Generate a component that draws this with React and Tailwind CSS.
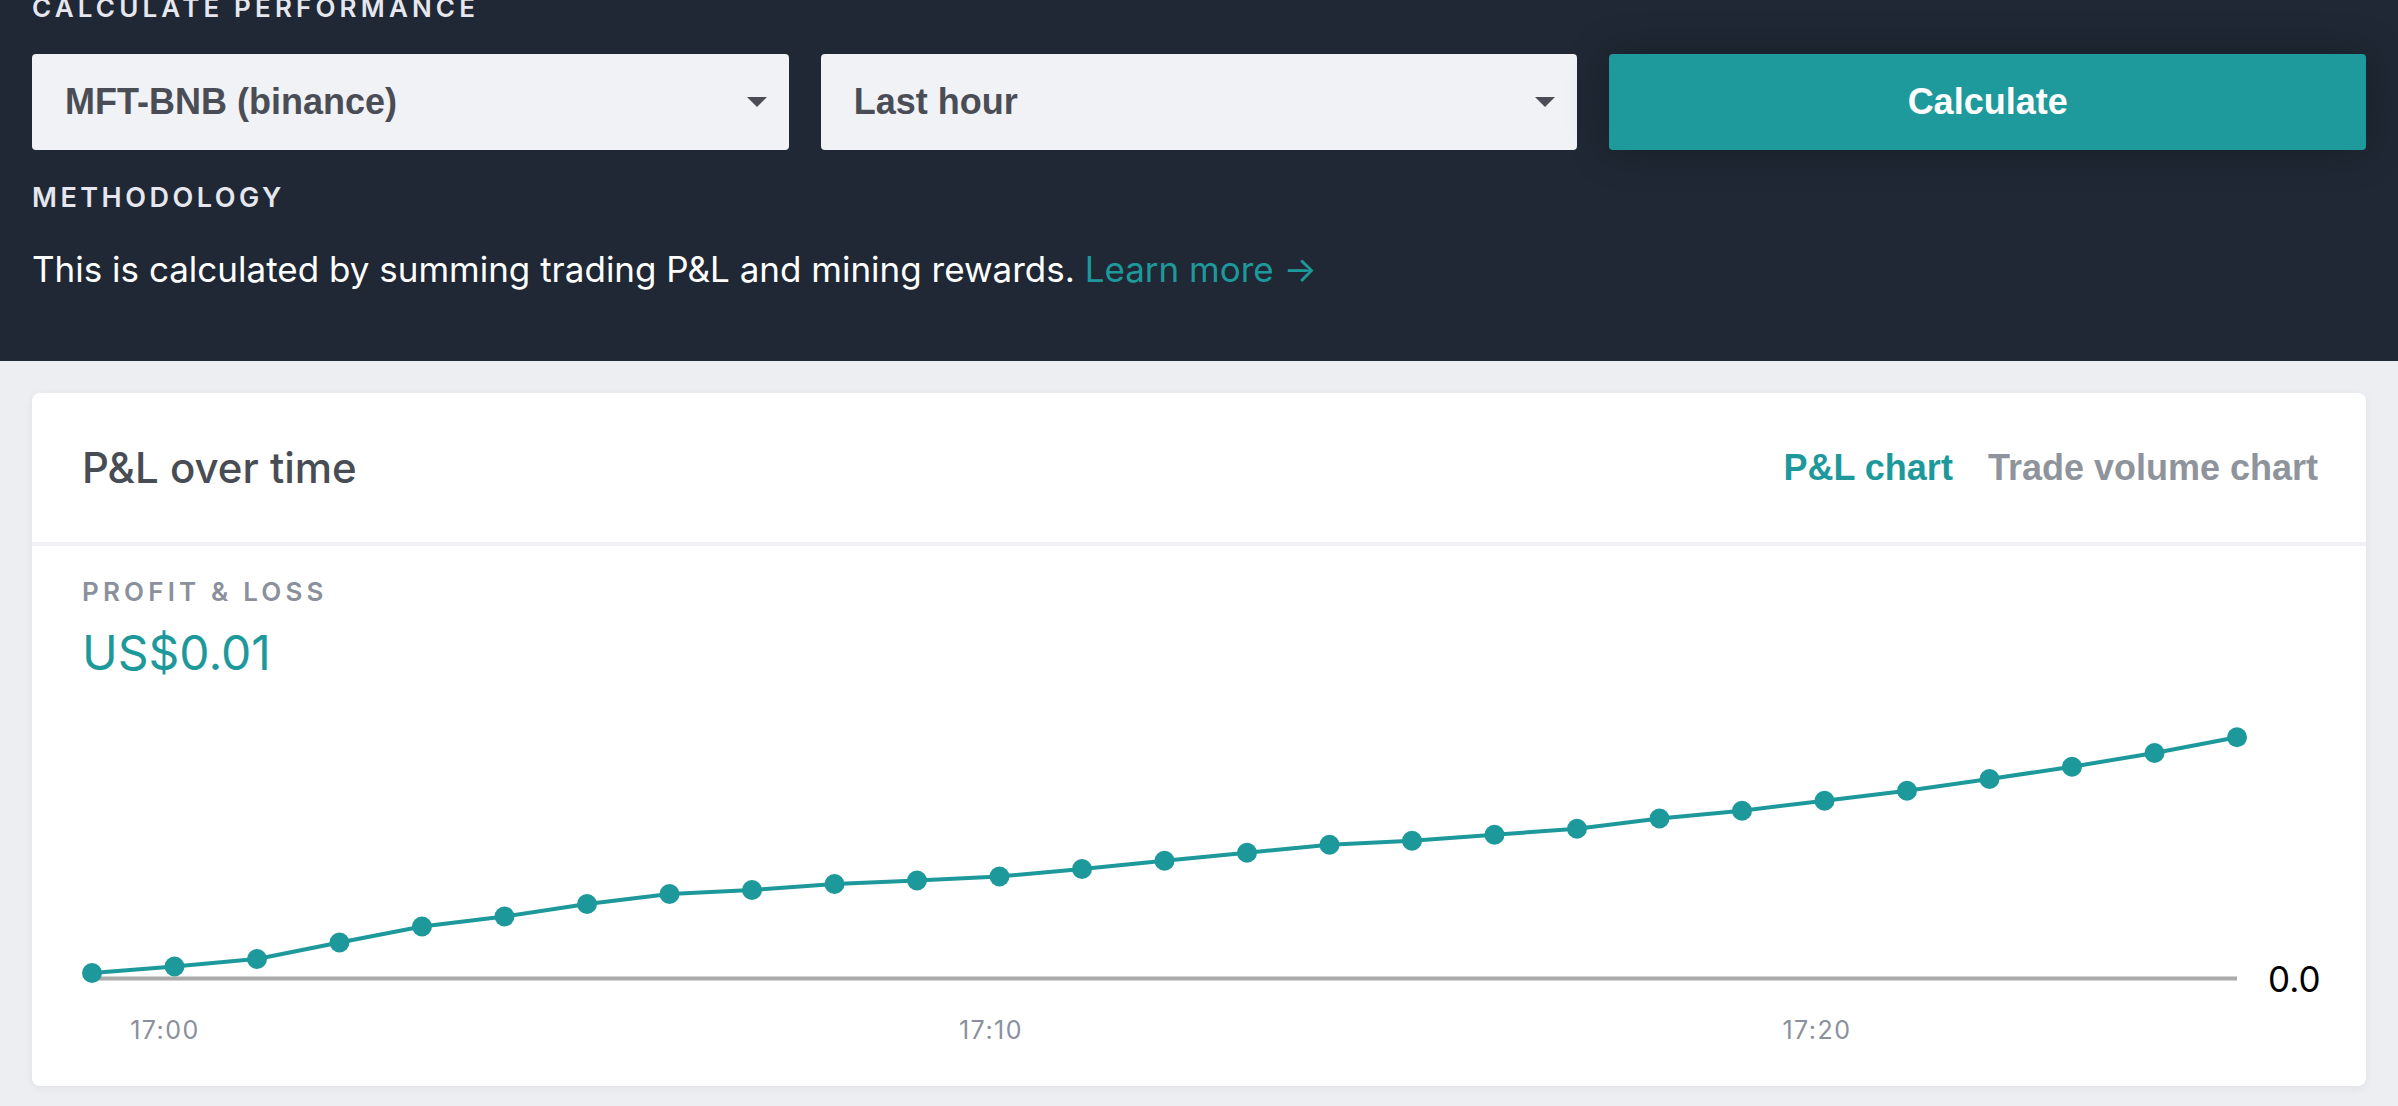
import { useState } from "react";

const TEAL = "#1e999b";

const points = [
  974, 967.5, 960, 943.5, 927.5, 917.5, 905, 895, 891, 885, 881.5, 877.5, 870,
  861.7, 853.7, 845.7, 841.7, 835.7, 829.7, 819.5, 811.7, 801.7, 791.7, 780,
  767.7, 754, 738.3,
].map((y, i) => ({ x: 60 + 82.5 * i, y: y - 678 }));

function SelectBox({ label }) {
  return (
    <div className="h-[96px] rounded-[4px] bg-[#f1f2f6] flex items-center justify-between pl-[33px] pr-[22px]">
      <span className="font-['Liberation_Sans',Arial,sans-serif] font-bold text-[36px] text-[#4a4d55]">
        {label}
      </span>
      <svg width="20" height="10" viewBox="0 0 20 10">
        <path d="M0 0 L20 0 L10 10 Z" fill="#4a4d55" />
      </svg>
    </div>
  );
}

function PnlChart() {
  const line = points.map((p) => `${p.x},${p.y}`).join(" ");

  return (
    <svg width="2335" height="409" viewBox="0 0 2335 409" className="block">
      <line x1="60" y1="301.5" x2="2205" y2="301.5" stroke="#aaaaaa" strokeWidth="4" />
      <polyline points={line} fill="none" stroke={TEAL} strokeWidth="4" strokeLinejoin="round" />
      {points.map((p, i) => (
        <circle key={i} cx={p.x} cy={p.y} r="10" fill={TEAL} />
      ))}
      <text x="2236" y="315" fontFamily="Inter, sans-serif" fontSize="35" fill="#000">
        0.0
      </text>
      {[
        ["17:00", 133],
        ["17:10", 959],
        ["17:20", 1785],
      ].map(([t, x]) => (
        <text
          key={t}
          x={x}
          y="362"
          textAnchor="middle"
          fontFamily="Inter, sans-serif"
          fontSize="25"
          letterSpacing="1.5"
          fill="#8a909c"
        >
          {t}
        </text>
      ))}
    </svg>
  );
}

export default function App() {
  const [tab, setTab] = useState("pnl");

  return (
    <div className="min-h-screen bg-[#eceef2] font-['Inter',sans-serif] overflow-hidden">
      <div className="bg-[#1f2834] px-[32px] pb-[74px]">
        <div className="mt-[-5px] h-[26px] leading-none text-[26px] font-semibold tracking-[0.16em] text-[#e6e7ee]">
          CALCULATE PERFORMANCE
        </div>

        <div className="grid grid-cols-3 gap-[32px] mt-[33px]">
          <SelectBox label="MFT-BNB (binance)" />
          <SelectBox label="Last hour" />
          <button className="h-[96px] rounded-[4px] bg-[#1f9a9c] shadow-[0_0_40px_rgba(0,0,0,0.25)] text-white font-['Liberation_Sans',Arial,sans-serif] font-bold text-[36px]">
            Calculate
          </button>
        </div>

        <div className="mt-[34px] h-[26px] leading-none text-[27px] font-semibold tracking-[0.13em] text-[#e6e7ee]">
          METHODOLOGY
        </div>

        <p className="mt-[42px] leading-none text-[35px] text-white">
          This is calculated by summing trading P&L and mining rewards.{" "}
          <a className="text-[#1e999b]">Learn more →</a>
        </p>
      </div>

      <div className="px-[32px] pt-[32px]">
        <div className="rounded-[8px] bg-white shadow-[0_2px_10px_rgba(0,0,0,0.06)]">
          <div className="h-[153px] flex items-center justify-between pl-[50px] pr-[48px] border-b-[4px] border-[#eff1f4]">
            <h2 className="text-[42px] font-medium text-[#484c55]">P&L over time</h2>
            <div className="flex gap-[35px] font-['Liberation_Sans',Arial,sans-serif] font-bold text-[36px]">
              <button
                onClick={() => setTab("pnl")}
                className={tab === "pnl" ? "text-[#1e999b]" : "text-[#8e939c]"}
              >
                P&L chart
              </button>
              <button
                onClick={() => setTab("volume")}
                className={tab === "volume" ? "text-[#1e999b]" : "text-[#8e939c]"}
              >
                Trade volume chart
              </button>
            </div>
          </div>

          <div className="pt-[33px]">
            <div className="pl-[50px] leading-none text-[26px] font-semibold tracking-[0.16em] text-[#8a909c]">
              PROFIT &amp; LOSS
            </div>
            <div className="pl-[50px] mt-[24px] leading-none text-[48px] text-[#1e999b]">
              US$0.01
            </div>
            <PnlChart />
          </div>
        </div>
      </div>
    </div>
  );
}
